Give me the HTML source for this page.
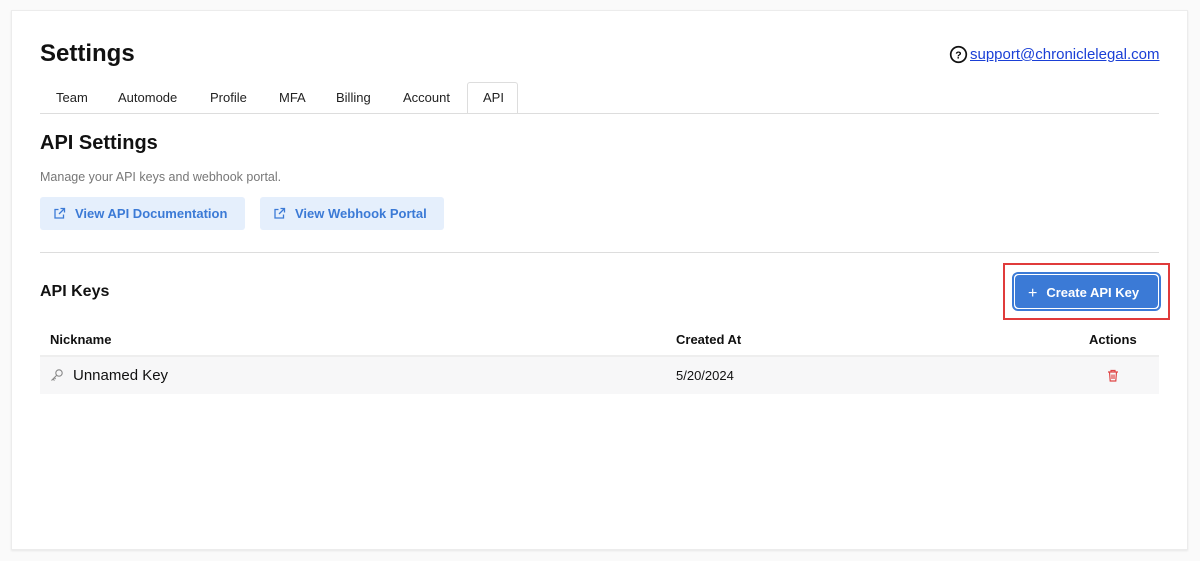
<!DOCTYPE html>
<html><head><meta charset="utf-8"><style>
*{box-sizing:border-box;margin:0;padding:0}
body{width:1200px;height:561px;background:#fafafa;font-family:"Liberation Sans",sans-serif;position:relative;overflow:hidden;color:#111}
.card{position:absolute;left:11px;top:10px;width:1177px;height:540px;background:#fff;border:1px solid #ececec;box-shadow:0 1px 2px rgba(0,0,0,.08)}
.a{position:absolute}
.tab{position:absolute;top:90px;font-size:13px;color:#222}
.btn{position:absolute;top:197px;height:33px;background:#e5effc;border-radius:3px;color:#3b7ad6;font-size:13px;font-weight:bold;padding:9px 0 0 13px;display:flex;align-items:flex-start}
.btn svg{margin:1px 9px 0 0}
</style></head><body>
<div class="card"></div>
<div class="a" style="left:40px;top:40px;font-size:24px;font-weight:bold">Settings</div>
<div class="a" style="left:949px;top:45px;font-size:15px;display:flex;align-items:center">
<svg width="19" height="19" viewBox="0 0 20 20"><circle cx="10" cy="10" r="8.2" fill="none" stroke="#111" stroke-width="1.8"/><text x="10" y="14" text-anchor="middle" font-size="11" font-weight="bold" font-family="Liberation Sans">?</text></svg>
<a style="color:#1a3fd6;text-decoration:underline;margin-left:2px">support@chroniclelegal.com</a></div>
<div class="a" style="left:467px;top:82px;width:51px;height:32px;border:1px solid #ddd;border-bottom:none;background:#fff;border-radius:3px 3px 0 0"></div>
<div class="a" style="left:40px;top:113px;width:1119px;height:1px;background:#ddd"></div>
<span class="tab" style="left:56px">Team</span>
<span class="tab" style="left:118px">Automode</span>
<span class="tab" style="left:210px">Profile</span>
<span class="tab" style="left:279px">MFA</span>
<span class="tab" style="left:336px">Billing</span>
<span class="tab" style="left:403px">Account</span>
<span class="tab" style="left:483px">API</span>
<div class="a" style="left:40px;top:132px;font-size:20px;font-weight:bold">API Settings</div>
<div class="a" style="left:40px;top:170px;font-size:12.5px;color:#777">Manage your API keys and webhook portal.</div>
<div class="btn" style="left:40px;width:205px"><svg width="13" height="13" viewBox="0 0 13 13" fill="none" stroke="#3b7ad6" stroke-width="1.3"><path d="M5.5 2.5H2v8.5h8.5V7.5M7.5 1.5h4v4M11.5 1.5L6 7"/></svg>View API Documentation</div>
<div class="btn" style="left:260px;width:184px"><svg width="13" height="13" viewBox="0 0 13 13" fill="none" stroke="#3b7ad6" stroke-width="1.3"><path d="M5.5 2.5H2v8.5h8.5V7.5M7.5 1.5h4v4M11.5 1.5L6 7"/></svg>View Webhook Portal</div>
<div class="a" style="left:40px;top:252px;width:1119px;height:1px;background:#ddd"></div>
<div class="a" style="left:40px;top:283px;font-size:16px;font-weight:bold">API Keys</div>
<div class="a" style="left:1003px;top:263px;width:167px;height:57px;border:2px solid #e03b3b"></div>
<div class="a" style="left:1012px;top:272px;width:149px;height:39px;border:2px solid #3b7ad6;border-radius:6px;background:#fff"></div>
<div class="a" style="left:1015px;top:275px;width:143px;height:33px;background:#3b7ad6;border-radius:4px;color:#fff;font-size:13px;font-weight:bold;padding:9px 0 0 13px"><span style="font-weight:normal;font-size:16px;margin-right:9px;position:relative;top:1px">+</span>Create API Key</div>
<div class="a" style="left:50px;top:332px;font-size:13px;font-weight:bold">Nickname</div>
<div class="a" style="left:676px;top:332px;font-size:13px;font-weight:bold">Created At</div>
<div class="a" style="left:1089px;top:332px;font-size:13px;font-weight:bold">Actions</div>
<div class="a" style="left:40px;top:355px;width:1119px;height:2px;background:#eee"></div>
<div class="a" style="left:40px;top:357px;width:1119px;height:37px;background:#f7f7f8"></div>
<svg class="a" style="left:50px;top:368px" width="14" height="14" viewBox="0 0 14 14" fill="none" stroke="#888" stroke-width="1.1"><circle cx="9" cy="5" r="3.2"/><path d="M6.6 7.4L1.5 12.5M3 11l1.5 1.5M4.3 9.7l1.3 1.3"/></svg>
<div class="a" style="left:73px;top:367px;font-size:15px">Unnamed Key</div>
<div class="a" style="left:676px;top:368px;font-size:13px">5/20/2024</div>
<svg class="a" style="left:1107px;top:369px" width="12" height="13" viewBox="0 0 12 13" fill="none" stroke="#e04545" stroke-width="1.2"><path d="M1 3h10M4 3V1.5h4V3M2.5 3l.7 9h5.6l.7-9M5 5.5v4.5M7 5.5v4.5"/></svg>
</body></html>
